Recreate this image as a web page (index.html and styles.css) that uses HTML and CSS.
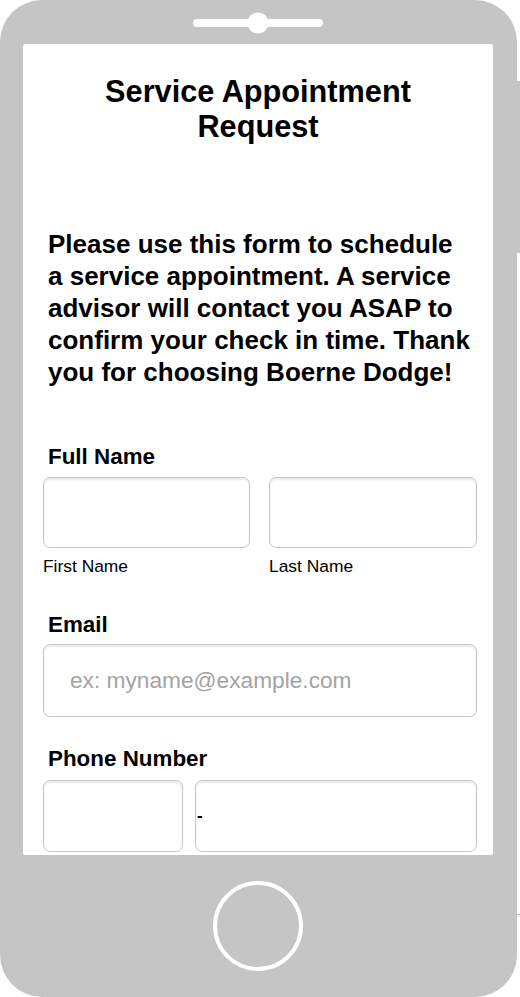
FILE: index.html
```html
<!DOCTYPE html>
<html lang="en">
<head>
<meta charset="utf-8">
<title>Service Appointment Request</title>
<link rel="stylesheet" href="styles.css">
</head>
<body>
<div class="device">
  <div class="bezel-top">
    <svg class="speaker" width="130" height="22" viewBox="0 0 130 22" aria-hidden="true">
      <rect x="0" y="7" width="130" height="8" rx="4" fill="#fff"/>
      <circle cx="65" cy="11" r="10.5" fill="#fff"/>
    </svg>
  </div>
  <div class="screen">
    <h1 class="title">Service Appointment<br>Request</h1>
    <p class="intro">Please use this form to schedule a service appointment. A service advisor will contact you ASAP to confirm your check in time. Thank you for choosing Boerne Dodge!</p>

    <div class="field field-name">
      <label class="label">Full Name</label>
      <div class="row row-name">
        <div class="cell">
          <input class="box" type="text">
          <span class="sublabel">First Name</span>
        </div>
        <div class="cell">
          <input class="box" type="text">
          <span class="sublabel">Last Name</span>
        </div>
      </div>
    </div>

    <div class="field field-email">
      <label class="label">Email</label>
      <input class="box box-email" type="email" placeholder="ex: myname@example.com">
    </div>

    <div class="field field-phone">
      <label class="label">Phone Number</label>
      <div class="row row-phone">
        <input class="box" type="tel">
        <div class="box box-number"><span class="dash">-</span></div>
      </div>
    </div>
  </div>
  <div class="bezel-bottom">
    <svg class="home" width="92" height="92" viewBox="0 0 92 92" aria-hidden="true">
      <circle cx="46" cy="46" r="43" fill="none" stroke="#fff" stroke-width="4"/>
    </svg>
  </div>
  <span class="side-button"></span>
  <span class="side-mark"></span>
</div>
</body>
</html>
```
FILE: styles.css
```css
html, body {
  margin: 0;
  padding: 0;
  background: #fff;
}

body {
  width: 520px;
  height: 997px;
  overflow: hidden;
  font-family: "Liberation Sans", Arial, sans-serif;
  color: #000;
}

.device {
  position: relative;
  width: 517px;
  height: 997px;
  background: #c6c5c6;
  border-radius: 42px;
  display: flex;
  flex-direction: column;
  align-items: flex-start;
}

.bezel-top {
  width: 517px;
  height: 44px;
  display: flex;
  justify-content: center;
  align-items: flex-start;
  padding-top: 12px;
  box-sizing: border-box;
}

.speaker {
  display: block;
  margin-left: -1px;
}

.screen {
  margin-left: 23px;
  width: 470px;
  height: 811px;
  background: #fff;
  border-radius: 2px;
  overflow: hidden;
  box-sizing: border-box;
  padding: 30px 16px 0 20px;
}

.title {
  margin: 0 -16px 0 -20px;
  text-align: center;
  font-size: 30.7px;
  line-height: 35px;
  font-weight: 700;
}

.intro {
  margin: 84px 0 0 5px;
  width: 422px;
  font-size: 26px;
  line-height: 32px;
  font-weight: 700;
}

.field {
  display: flex;
  flex-direction: column;
}

.field-name {
  margin-top: 56px;
}

.field-email {
  margin-top: 36px;
}

.field-phone {
  margin-top: 29px;
}

.label {
  display: block;
  padding-left: 5px;
  font-size: 22.4px;
  line-height: 26px;
  font-weight: 700;
}

.row {
  display: grid;
  margin-top: 7px;
}

.row-name {
  grid-template-columns: 207px 208px;
  column-gap: 19px;
}

.row-phone {
  margin-top: 8px;
  grid-template-columns: 140px 282px;
  column-gap: 12px;
}

.cell {
  display: flex;
  flex-direction: column;
}

.box {
  display: block;
  box-sizing: border-box;
  width: 100%;
  height: 71px;
  margin: 0;
  padding: 0 0 0 26px;
  border: 1px solid #c6c6c6;
  border-radius: 7px;
  background: #fff;
  box-shadow: inset 0 2px 2px rgba(0, 0, 0, 0.08);
  font-family: "Liberation Sans", Arial, sans-serif;
  font-size: 22.7px;
  color: #000;
  outline: none;
}

.box-email {
  height: 73px;
  margin-top: 6px;
}

.box::placeholder {
  color: #a3a3a3;
  opacity: 1;
}

.row-phone .box {
  height: 72px;
}

.box-number {
  display: flex;
  align-items: center;
  padding-left: 1px;
}

.dash {
  font-size: 17px;
  font-weight: 700;
  line-height: 20px;
}

.sublabel {
  display: block;
  margin-top: 8px;
  font-size: 17.4px;
  line-height: 20px;
}

.bezel-bottom {
  width: 517px;
  flex: 1;
  display: flex;
  justify-content: center;
  align-items: center;
}

.home {
  display: block;
  margin-left: -1px;
  margin-top: -1px;
}

.side-button {
  position: absolute;
  left: 517px;
  top: 81px;
  width: 3px;
  height: 172px;
  background: #c6c5c6;
}

.side-mark {
  position: absolute;
  left: 516px;
  top: 914px;
  width: 4px;
  height: 1px;
  background: #bdbdbd;
}
```
